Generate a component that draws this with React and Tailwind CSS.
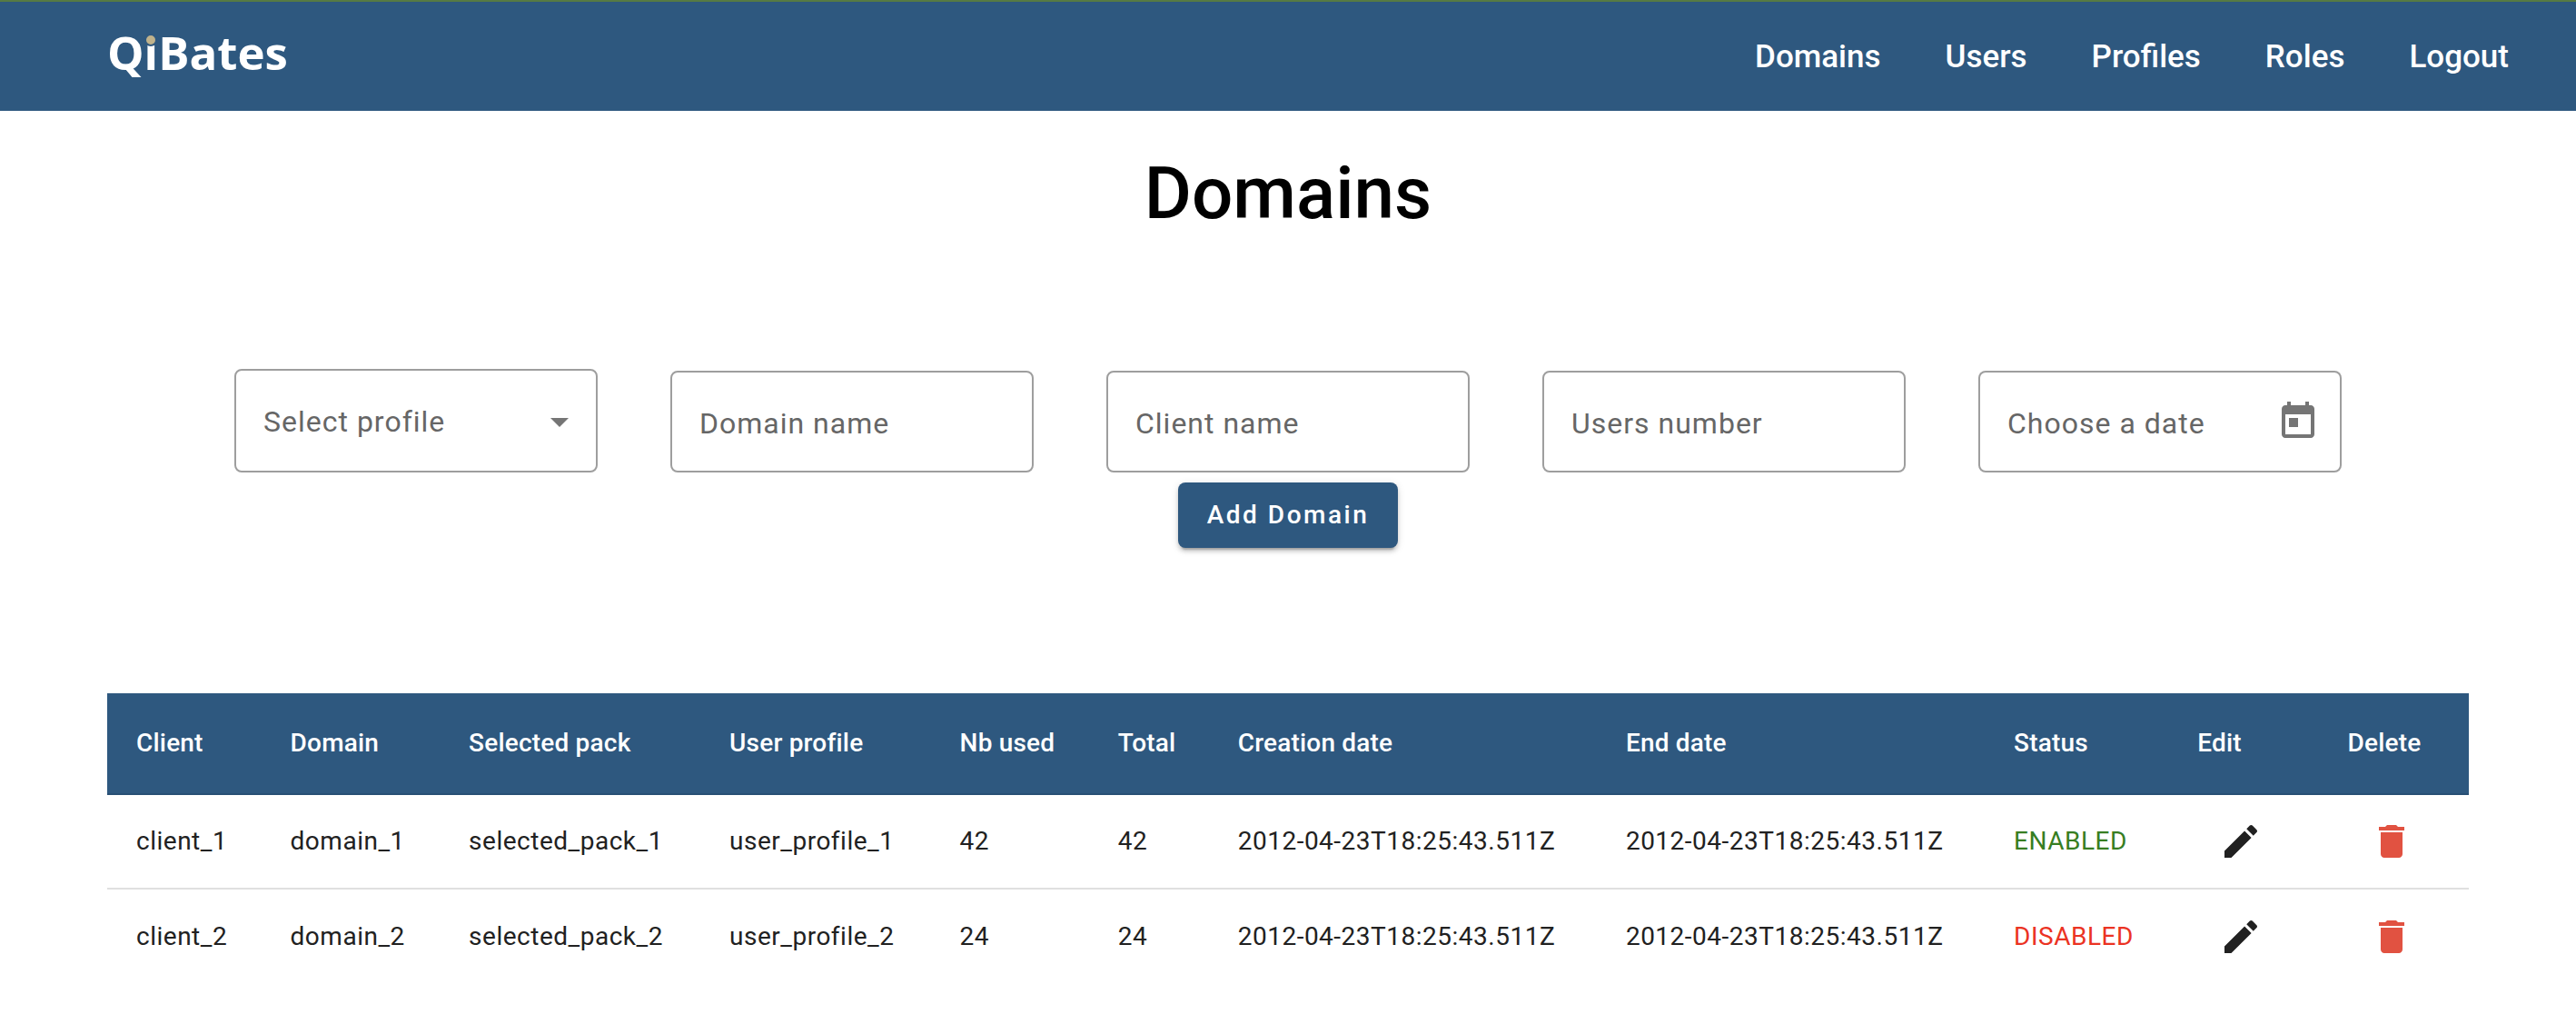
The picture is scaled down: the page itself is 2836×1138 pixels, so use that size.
import React from "react";

const NAV_LINKS = ["Domains", "Users", "Profiles", "Roles", "Logout"];

const COLUMNS = [
  "Client",
  "Domain",
  "Selected pack",
  "User profile",
  "Nb used",
  "Total",
  "Creation date",
  "End date",
  "Status",
  "Edit",
  "Delete",
];

const ROWS = [
  {
    client: "client_1",
    domain: "domain_1",
    pack: "selected_pack_1",
    profile: "user_profile_1",
    used: 42,
    total: 42,
    created: "2012-04-23T18:25:43.511Z",
    ended: "2012-04-23T18:25:43.511Z",
    enabled: true,
  },
  {
    client: "client_2",
    domain: "domain_2",
    pack: "selected_pack_2",
    profile: "user_profile_2",
    used: 24,
    total: 24,
    created: "2012-04-23T18:25:43.511Z",
    ended: "2012-04-23T18:25:43.511Z",
    enabled: false,
  },
];

function Icon({ d }) {
  return (
    <svg viewBox="0 0 24 24" className="size-12 fill-current" aria-hidden="true">
      <path d={d} />
    </svg>
  );
}

const TODAY =
  "M19 3h-1V1h-2v2H8V1H6v2H5c-1.11 0-1.99.9-1.99 2L3 19c0 1.1.89 2 2 2h14c1.1 0 2-.9 2-2V5c0-1.1-.9-2-2-2zm0 16H5V8h14v11zM7 10h5v5H7z";
const EDIT =
  "M3 17.25V21h3.75L17.81 9.94l-3.75-3.75L3 17.25zM20.71 7.04c.39-.39.39-1.02 0-1.41l-2.34-2.34c-.39-.39-1.02-.39-1.41 0l-1.83 1.83 3.75 3.75 1.83-1.83z";
const DELETE =
  "M6 19c0 1.1.9 2 2 2h8c1.1 0 2-.9 2-2V7H6v12zM19 4h-3.5l-1-1h-5l-1 1H5v2h14V4z";

function IconButton({ label, d, tone }) {
  return (
    <button
      type="button"
      aria-label={label}
      className={`flex size-24 shrink-0 cursor-pointer items-center justify-center ${tone}`}
    >
      <Icon d={d} />
    </button>
  );
}

function Header() {
  return (
    <header className="flex h-[122px] items-center justify-between border-t-2 border-[#567a43] bg-[#2e587f] pr-[74px] pl-[118px] text-white">
      <a
        href="#home"
        aria-label="QiBates"
        className="pb-2.5 font-['Open_Sans','Noto_Sans',sans-serif] text-[51px] leading-[72px] font-bold"
      >
        Q
        <span className="relative">
          i
          <span className="absolute top-[15px] left-1/2 size-3.5 -translate-x-1/2 rounded-full border-2 border-[#2e587f] bg-[#bfb28c]" />
        </span>
        Bates
      </a>
      <nav className="flex gap-[71px] pt-0.5 text-[35px] leading-10 font-medium">
        {NAV_LINKS.map((name) => (
          <a key={name} href={`#${name.toLowerCase()}`}>
            {name}
          </a>
        ))}
      </nav>
    </header>
  );
}

function TextField({ label }) {
  return (
    <input
      type="text"
      aria-label={label}
      placeholder={label}
      className="h-28 w-[400px] rounded-lg border-2 border-[#9e9e9e] px-[30px] pt-1 text-[32px] tracking-[1px] placeholder:text-[#666666]"
    />
  );
}

function DomainForm() {
  return (
    <form className="flex flex-col items-center gap-[11px]" onSubmit={(e) => e.preventDefault()}>
      <div className="flex flex-wrap items-end justify-center gap-20">
        <div className="relative">
          <select
            aria-label="Select profile"
            defaultValue=""
            className="block h-[114px] w-[400px] appearance-none rounded-lg border-2 border-[#9e9e9e] px-[30px] pt-0.5 text-[32px] tracking-[1px] text-[#666666]"
          >
            <option value="">Select profile</option>
            <option>user_profile_1</option>
            <option>user_profile_2</option>
          </select>
          <svg
            viewBox="0 0 20 10"
            className="pointer-events-none absolute top-[54px] right-8 h-2.5 w-5 fill-[#757575]"
            aria-hidden="true"
          >
            <path d="M0 0h20L10 10z" />
          </svg>
        </div>
        <TextField label="Domain name" />
        <TextField label="Client name" />
        <TextField label="Users number" />
        <div className="flex h-28 w-[400px] items-center rounded-lg pl-8 ring-2 ring-[#9e9e9e] ring-inset">
          <input
            type="text"
            aria-label="Choose a date"
            placeholder="Choose a date"
            className="min-w-0 flex-1 pt-1 text-[32px] tracking-[1px] placeholder:text-[#666666]"
          />
          <IconButton label="Open calendar" d={TODAY} tone="text-[#757575]" />
        </div>
      </div>
      <button
        type="submit"
        className="h-[72px] cursor-pointer rounded-lg bg-[#2e587f] px-8 text-[28px] font-medium tracking-[0.09em] text-white shadow-[0_6px_2px_-4px_rgba(0,0,0,0.2),0_4px_4px_rgba(0,0,0,0.14),0_2px_10px_rgba(0,0,0,0.12)]"
      >
        Add Domain
      </button>
    </form>
  );
}

function DomainTable() {
  return (
    <table className="w-full border-separate border-spacing-0 text-left text-[28px] leading-10 whitespace-nowrap text-[#212121]">
      <thead>
        <tr className="h-28 bg-[#2e587f] text-white">
          {COLUMNS.map((name) => (
            <th
              key={name}
              scope="col"
              className="border-b-2 border-[#284f74] px-8 font-medium tracking-[0.007em]"
            >
              {name}
            </th>
          ))}
        </tr>
      </thead>
      <tbody className="tracking-[0.018em] [&_td]:px-8 [&>tr:not(:last-child)>td]:border-b-2 [&>tr>td]:border-[#e0e0e0]">
        {ROWS.map((row) => (
          <tr key={row.client} className="h-[104px]">
            <td>{row.client}</td>
            <td>{row.domain}</td>
            <td>{row.pack}</td>
            <td>{row.profile}</td>
            <td>{row.used}</td>
            <td>{row.total}</td>
            <td>{row.created}</td>
            <td>{row.ended}</td>
            <td className={row.enabled ? "text-[#377e22]" : "text-[#eb3323]"}>
              {row.enabled ? "ENABLED" : "DISABLED"}
            </td>
            <td>
              <IconButton label={`Edit ${row.domain}`} d={EDIT} tone="text-[#212121]" />
            </td>
            <td>
              <IconButton label={`Delete ${row.domain}`} d={DELETE} tone="text-[#e15241]" />
            </td>
          </tr>
        ))}
      </tbody>
    </table>
  );
}

export default function App() {
  return (
    <div className="min-h-screen bg-white font-[Roboto,sans-serif]">
      <Header />
      <main>
        <h1 className="pt-11 text-center text-[80px] leading-[94px] font-medium text-black">
          Domains
        </h1>
        <section className="mt-[146px] px-10">
          <DomainForm />
        </section>
        <section className="mt-40 px-[118px]">
          <DomainTable />
        </section>
      </main>
    </div>
  );
}
